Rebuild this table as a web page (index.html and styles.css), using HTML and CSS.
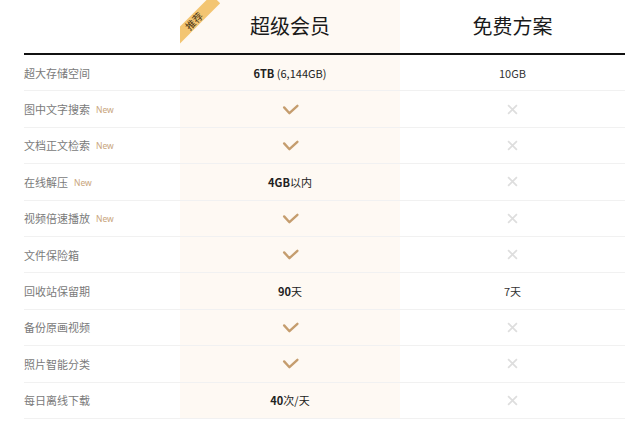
FILE: index.html
```html
<!DOCTYPE html>
<html lang="zh-CN">
<head>
<meta charset="utf-8">
<link rel="stylesheet" href="styles.css">
</head>
<body>
<div class="table">
  <div class="row head">
    <div class="cell label"></div>
    <div class="cell pro"><span class="ribbon">推荐</span><span class="title">超级会员</span></div>
    <div class="cell free"><span class="title">免费方案</span></div>
  </div>
  <div class="row">
    <div class="cell label">超大存储空间</div>
    <div class="cell pro val"><b>6TB</b>&nbsp;(6,144GB)</div>
    <div class="cell free val">10GB</div>
  </div>
  <div class="row">
    <div class="cell label">图中文字搜索<span class="new">New</span></div>
    <div class="cell pro"><svg class="check" viewBox="0 0 16 10"><path d="M2 3 L7 8.5 L14.5 1.5"/></svg></div>
    <div class="cell free"><svg class="cross" viewBox="0 0 10 10"><path d="M1 1 L9 9 M9 1 L1 9"/></svg></div>
  </div>
  <div class="row">
    <div class="cell label">文档正文检索<span class="new">New</span></div>
    <div class="cell pro"><svg class="check" viewBox="0 0 16 10"><path d="M2 3 L7 8.5 L14.5 1.5"/></svg></div>
    <div class="cell free"><svg class="cross" viewBox="0 0 10 10"><path d="M1 1 L9 9 M9 1 L1 9"/></svg></div>
  </div>
  <div class="row">
    <div class="cell label">在线解压<span class="new">New</span></div>
    <div class="cell pro val"><b>4GB</b>以内</div>
    <div class="cell free"><svg class="cross" viewBox="0 0 10 10"><path d="M1 1 L9 9 M9 1 L1 9"/></svg></div>
  </div>
  <div class="row">
    <div class="cell label">视频倍速播放<span class="new">New</span></div>
    <div class="cell pro"><svg class="check" viewBox="0 0 16 10"><path d="M2 3 L7 8.5 L14.5 1.5"/></svg></div>
    <div class="cell free"><svg class="cross" viewBox="0 0 10 10"><path d="M1 1 L9 9 M9 1 L1 9"/></svg></div>
  </div>
  <div class="row">
    <div class="cell label">文件保险箱</div>
    <div class="cell pro"><svg class="check" viewBox="0 0 16 10"><path d="M2 3 L7 8.5 L14.5 1.5"/></svg></div>
    <div class="cell free"><svg class="cross" viewBox="0 0 10 10"><path d="M1 1 L9 9 M9 1 L1 9"/></svg></div>
  </div>
  <div class="row">
    <div class="cell label">回收站保留期</div>
    <div class="cell pro val"><b>90</b>天</div>
    <div class="cell free val">7天</div>
  </div>
  <div class="row">
    <div class="cell label">备份原画视频</div>
    <div class="cell pro"><svg class="check" viewBox="0 0 16 10"><path d="M2 3 L7 8.5 L14.5 1.5"/></svg></div>
    <div class="cell free"><svg class="cross" viewBox="0 0 10 10"><path d="M1 1 L9 9 M9 1 L1 9"/></svg></div>
  </div>
  <div class="row">
    <div class="cell label">照片智能分类</div>
    <div class="cell pro"><svg class="check" viewBox="0 0 16 10"><path d="M2 3 L7 8.5 L14.5 1.5"/></svg></div>
    <div class="cell free"><svg class="cross" viewBox="0 0 10 10"><path d="M1 1 L9 9 M9 1 L1 9"/></svg></div>
  </div>
  <div class="row">
    <div class="cell label">每日离线下载</div>
    <div class="cell pro val"><b>40</b>次/天</div>
    <div class="cell free"><svg class="cross" viewBox="0 0 10 10"><path d="M1 1 L9 9 M9 1 L1 9"/></svg></div>
  </div>
</div>
</body>
</html>
```

FILE: styles.css
```css
html, body {
  margin: 0;
  padding: 0;
  background: #ffffff;
}
body {
  font-family: "Noto Sans CJK SC", "Noto Sans", sans-serif;
  overflow: hidden;
}
.table {
  margin-left: 24px;
  width: 601px;
}
.row {
  display: grid;
  grid-template-columns: 156px 220px 225px;
  height: 36.4px;
}
.cell {
  display: flex;
  align-items: center;
  border-bottom: 1px solid #f1f1f1;
  box-sizing: border-box;
}
.row.head {
  height: 55px;
}
.row.head .cell {
  border-bottom: 2px solid #111;
  justify-content: center;
  padding-bottom: 2px;
}
.pro {
  background: #fef9f3;
  justify-content: center;
  position: relative;
  overflow: hidden;
}
.free {
  justify-content: center;
}
.label {
  font-size: 11px;
  color: #7a7a7a;
}
.new {
  font-family: "Noto Sans", sans-serif;
  font-size: 8.5px;
  color: #c9a57c;
  margin-left: 6px;
  margin-top: 1px;
}
.title {
  font-size: 20px;
  color: #1a1a1a;
}
.val {
  font-size: 11px;
  color: #222;
}
.val b {
  font-weight: 700;
}
.free.val {
  color: #333;
}
.check {
  width: 17px;
  height: 11px;
  fill: none;
  stroke: #c59d6e;
  stroke-width: 2.2;
  stroke-linecap: round;
  stroke-linejoin: round;
}
.cross {
  width: 11px;
  height: 11px;
  fill: none;
  stroke: #dedede;
  stroke-width: 1.6;
}
.ribbon {
  position: absolute;
  left: -17px;
  top: 15px;
  width: 62px;
  height: 12px;
  line-height: 12px;
  text-align: center;
  font-size: 10px;
  color: #4a3516;
  background: #f3c572;
  transform: rotate(-45deg);
}
```
